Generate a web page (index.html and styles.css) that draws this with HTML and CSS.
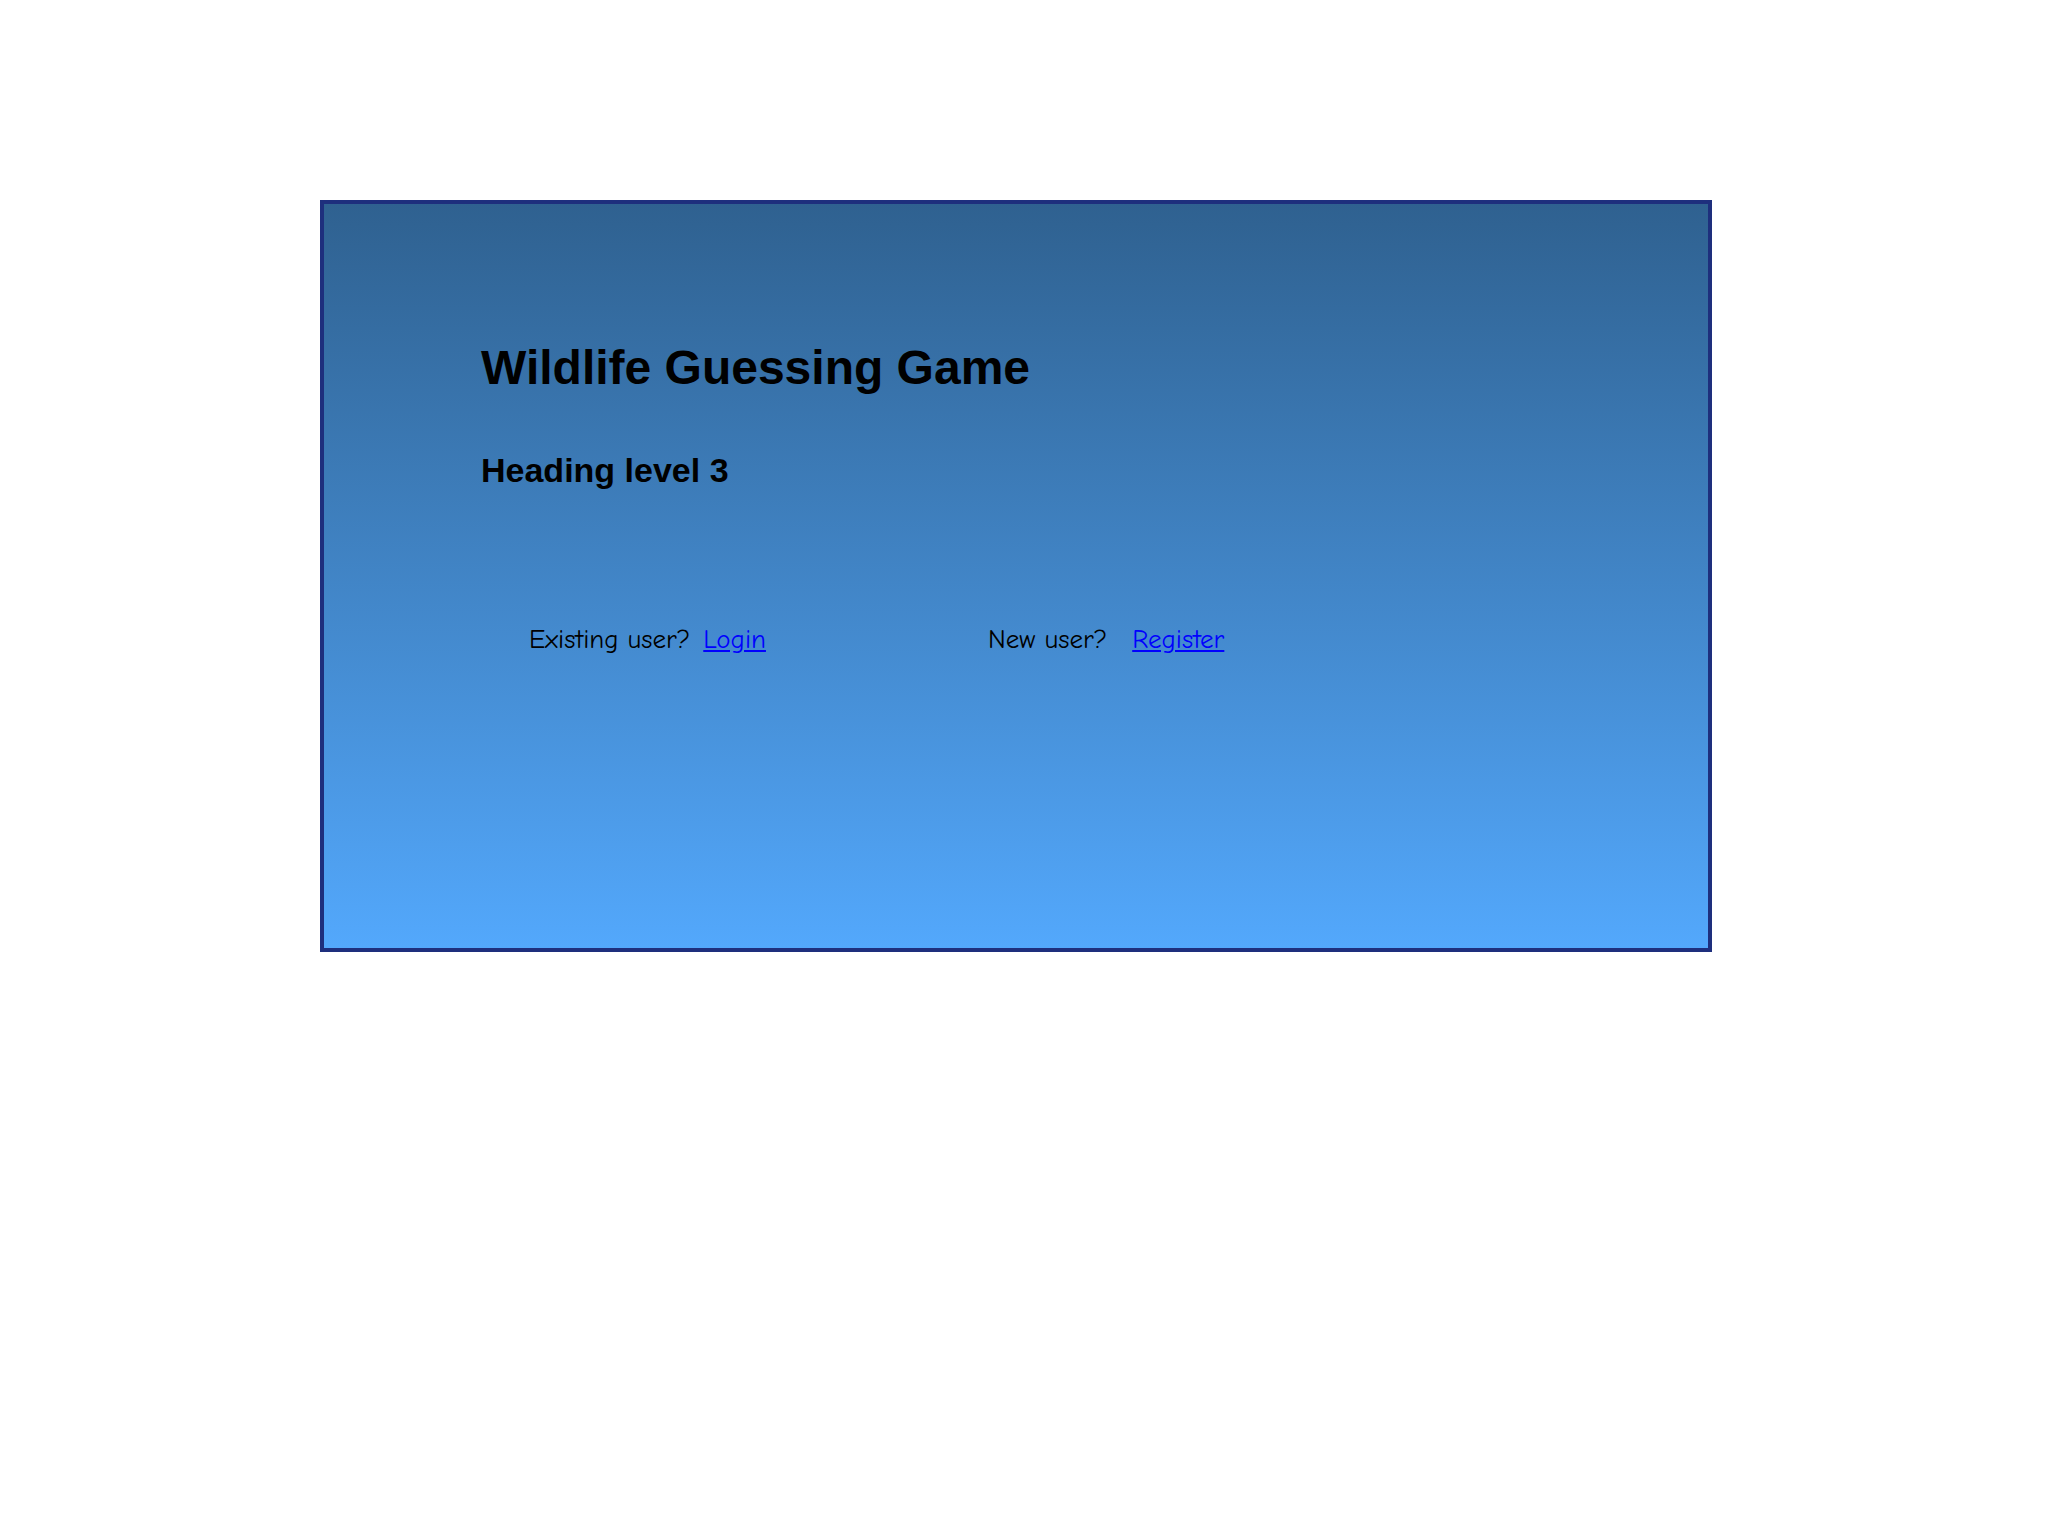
FILE: index.html
```html
<!DOCTYPE html>
<html lang="en">
<head>
<meta charset="utf-8">
<title>Wildlife Guessing Game</title>
<link rel="stylesheet" href="styles.css">
</head>
<body>
  <div class="frame">
    <h1 class="title">Wildlife Guessing Game</h1>
    <h3 class="subtitle">Heading level 3</h3>
    <div class="auth">
      <div class="group group-login">
        <span class="label">Existing user?</span>
        <a class="link" href="#">Login</a>
      </div>
      <div class="group group-register">
        <span class="label">New user?</span>
        <a class="link" href="#">Register</a>
      </div>
    </div>
  </div>
</body>
</html>
```

FILE: styles.css
```css
html, body {
  margin: 0;
  padding: 0;
  background: #ffffff;
}

.frame {
  box-sizing: border-box;
  margin: 200px 0 0 320px;
  width: 1392px;
  height: 752px;
  border: 4px solid #1e2f7d;
  background: linear-gradient(to bottom, #2f6190, #53a8fc);
  padding: 136px 0 0 157px;
}

.title {
  margin: 0;
  font-family: "Liberation Sans", Arial, sans-serif;
  font-weight: bold;
  font-size: 48px;
  line-height: 1.15;
  color: #000;
}

.subtitle {
  margin: 56px 0 0 0;
  font-family: "Liberation Sans", Arial, sans-serif;
  font-weight: bold;
  font-size: 34px;
  line-height: 1.15;
  color: #000;
}

.auth {
  display: grid;
  grid-template-columns: 459px auto;
  justify-content: start;
  margin: 134px 0 0 48px;
  font-family: "Comic Sans MS", "Comic Neue", "DejaVu Sans", sans-serif;
  font-size: 27px;
  line-height: 32px;
  color: #000;
}

.group {
  display: flex;
  align-items: baseline;
}

.group-login {
  gap: 13px;
}

.group-register {
  gap: 25px;
}

.link {
  color: #0000ff;
  text-decoration: underline;
}
```
